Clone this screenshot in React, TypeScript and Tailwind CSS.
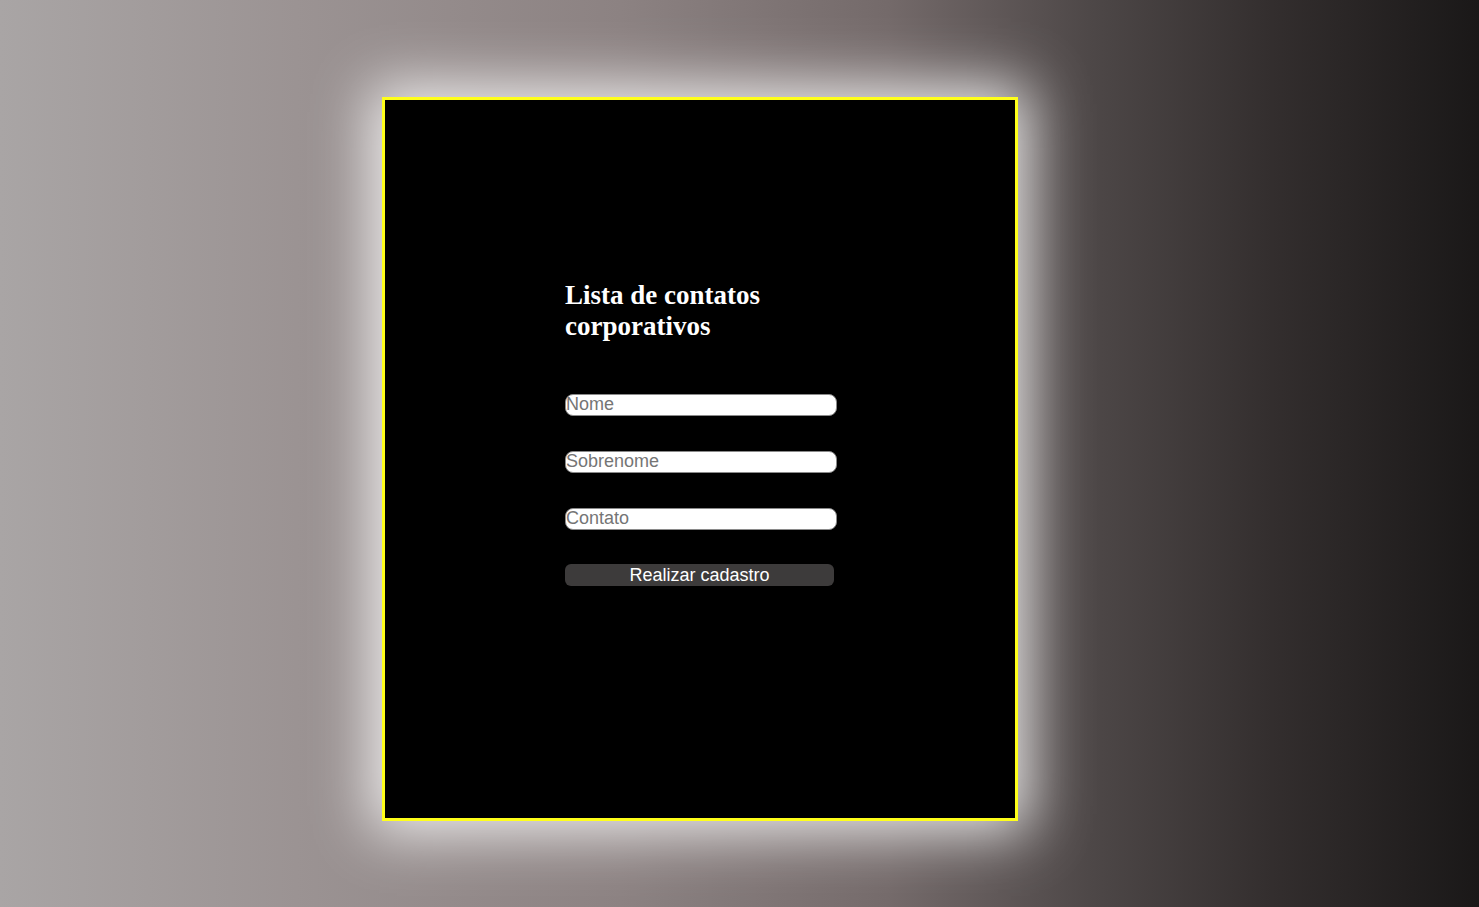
import React from "react";

const fields = ["Nome", "Sobrenome", "Contato"];

const App = () => {
  return (
    <div className="min-h-screen w-full pt-[97px] pl-[382px] bg-[linear-gradient(to_right,#a9a5a5_0%,#9b9393_20%,#8c8282_42%,#746a6a_60%,#4d4747_74%,#332e2e_86%,#1a1818_100%)]">
      <div className="w-[636px] h-[724px] bg-black border-[3px] border-[#ffff1a] shadow-[0_0_55px_12px_rgba(255,255,255,0.85)]">
        <div className="w-[272px] ml-[180px] pt-[180px] flex flex-col">
          <h1 className="text-white font-bold text-[27px] leading-[31px] font-['Liberation_Serif','Times_New_Roman',serif]">
            Lista de contatos corporativos
          </h1>
          <form className="mt-[52px] flex flex-col gap-[35px] font-['Liberation_Sans',Arial,sans-serif]">
            {fields.map((f) => (
              <input
                key={f}
                type="text"
                placeholder={f}
                className="w-[272px] h-[22px] bg-white border border-[#8a8a8a] rounded-[8px] p-0 pb-[2px] text-[18px] leading-[18px] text-black placeholder:text-[#757575] outline-none"
              />
            ))}
            <button
              type="button"
              className="w-[269px] h-[22px] -mt-[1px] bg-[#3d3b3b] rounded-[6px] text-white text-[18px] leading-[20px]"
            >
              Realizar cadastro
            </button>
          </form>
        </div>
      </div>
    </div>
  );
};

export default App;
